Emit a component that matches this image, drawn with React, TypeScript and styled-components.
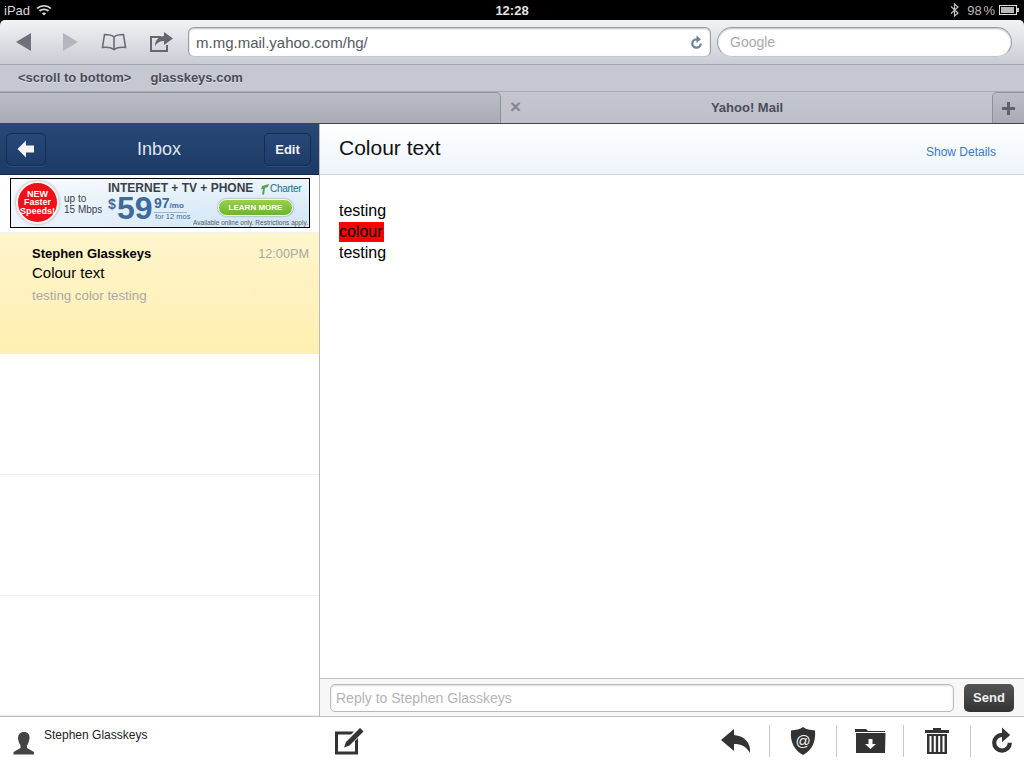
import React from 'react';
import styled, { createGlobalStyle } from 'styled-components';

const Global = createGlobalStyle`
  html, body {
    margin: 0;
    padding: 0;
    background: #000;
  }
  * {
    box-sizing: border-box;
  }
`;

const Screen = styled.div`
  width: 1024px;
  height: 768px;
  overflow: hidden;
  display: flex;
  flex-direction: column;
  background: #fff;
  font-family: "Liberation Sans", Arial, sans-serif;
  color: #000;
`;

const StatusBar = styled.div`
  height: 20px;
  flex: none;
  background: #000;
  color: #d8d8d8;
  font-size: 13px;
  display: grid;
  grid-template-columns: 1fr auto 1fr;
  align-items: center;
  padding: 0 4px;
`;

const StatusSide = styled.div<{ $right?: boolean }>`
  display: flex;
  align-items: center;
  gap: ${p => (p.$right ? '4px' : '6px')};
  justify-content: ${p => (p.$right ? 'flex-end' : 'flex-start')};
`;

const Clock = styled.div`
  font-weight: bold;
  color: #e4e4e4;
`;

const Percent = styled.span`
  word-spacing: -2px;
  margin-left: 4px;
  color: #bcbcbc;
`;

const Battery = styled.div`
  width: 18px;
  height: 10px;
  border: 1px solid #ddd;
  padding: 1px;
  margin-right: 3px;
  position: relative;
  &::before {
    content: '';
    display: block;
    height: 100%;
    width: 96%;
    background: #b8b8b8;
  }
  &::after {
    content: '';
    position: absolute;
    right: -3px;
    top: 2px;
    width: 2px;
    height: 4px;
    background: #ccc;
  }
`;

const Chrome = styled.div`
  height: 104px;
  flex: none;
  background: #000;
`;

const Toolbar = styled.div`
  height: 45px;
  background: linear-gradient(#f2f3f5, #c9ccd4);
  border-bottom: 1px solid #a4a6ac;
  border-radius: 5px 5px 0 0;
  display: flex;
  align-items: center;
  padding: 0 12px 0 15px;
`;

const NavIcons = styled.div`
  width: 173px;
  flex: none;
  display: grid;
  grid-template-columns: 47px 39px 48px 39px;
  align-items: center;
`;

const UrlField = styled.div`
  width: 523px;
  height: 30px;
  flex: none;
  background: #fff;
  border: 1px solid #9a9ca2;
  border-bottom-color: #c4c6cc;
  border-radius: 6px;
  box-shadow: inset 0 1px 2px rgba(0, 0, 0, 0.25);
  color: #55585f;
  font-size: 15px;
  padding: 0 6px 0 7px;
  display: flex;
  align-items: center;
  justify-content: space-between;
`;

const SearchField = styled.div`
  width: 295px;
  height: 30px;
  margin-left: 6px;
  flex: none;
  background: #fff;
  border: 1px solid #9a9ca2;
  border-bottom-color: #c4c6cc;
  border-radius: 15px;
  box-shadow: inset 0 1px 2px rgba(0, 0, 0, 0.25);
  color: #a9a9a9;
  font-size: 14px;
  padding: 0 12px;
  display: flex;
  align-items: center;
`;

const Bookmarks = styled.div`
  height: 27px;
  background: #c6c8d1;
  display: flex;
  align-items: center;
  gap: 19px;
  padding: 0 18px 2px;
  font-size: 13px;
  font-weight: bold;
  color: #4a4c57;
  text-shadow: 0 1px 0 rgba(255, 255, 255, 0.4);
  border-bottom: 1px solid #a9abb2;
`;

const TabStrip = styled.div`
  height: 32px;
  display: flex;
  background: linear-gradient(#c4c6cf, #bdbfc9);
  border-bottom: 1px solid #44464c;
`;

const EmptyTab = styled.div`
  width: 501px;
  flex: none;
  background: linear-gradient(#bcbec6, #a9abb4);
  border-top: 1px solid #93959c;
  border-right: 1px solid #8e9097;
  border-top-right-radius: 5px;
`;

const ActiveTab = styled.div`
  flex: 1;
  position: relative;
  display: flex;
  align-items: center;
  justify-content: center;
  font-size: 13px;
  font-weight: bold;
  color: #4b4d58;
  padding-left: 1px;
`;

const CloseTab = styled.span`
  position: absolute;
  left: 9px;
  top: 6px;
  font-size: 19px;
  font-weight: bold;
  color: #85878e;
  line-height: 18px;
`;

const PlusTab = styled.div`
  width: 32px;
  flex: none;
  background: linear-gradient(#bcbec6, #a9abb4);
  border-top: 1px solid #93959c;
  border-left: 1px solid #8e9097;
  border-top-left-radius: 5px;
  display: flex;
  align-items: center;
  justify-content: center;
`;

const Main = styled.div`
  flex: 1;
  min-height: 0;
  display: flex;
`;

const Sidebar = styled.div`
  width: 320px;
  flex: none;
  border-right: 1px solid #bcbcbc;
  display: flex;
  flex-direction: column;
  box-shadow: inset 0 -2px 2px -2px #bbb;
`;

const NavBar = styled.div`
  height: 51px;
  flex: none;
  background: linear-gradient(#284875, #1d3a66);
  border-bottom: 1px solid #122848;
  display: flex;
  align-items: center;
  justify-content: space-between;
  padding: 0 8px 0 6px;
  position: relative;
`;

const NavTitle = styled.div`
  position: absolute;
  left: 0;
  right: 1px;
  top: 15px;
  text-align: center;
  color: #dfe6f0;
  font-size: 18px;
  pointer-events: none;
`;

const NavButton = styled.div<{ $wide?: boolean }>`
  width: ${p => (p.$wide ? '47px' : '40px')};
  height: 33px;
  border: 1px solid #132c50;
  border-radius: 5px;
  background: linear-gradient(#27487a, #1e3c68);
  box-shadow: 0 1px 0 rgba(255, 255, 255, 0.1);
  color: #f2f4f8;
  font-size: 13px;
  font-weight: bold;
  display: flex;
  align-items: center;
  justify-content: center;
`;

const AdSlot = styled.div`
  height: 58px;
  flex: none;
  padding: 3px 9px 0 10px;
  background: #fff;
  border-bottom: 1px solid #f1f1f1;
`;

const Ad = styled.div`
  width: 300px;
  height: 50px;
  border: 1px solid #000;
  background: radial-gradient(ellipse at 85% 100%, #cfe4f6 0%, #e6f1fa 55%, #fbfcfe 100%);
  position: relative;
  overflow: hidden;
  color: #3b4250;
`;

const AdBadge = styled.div`
  position: absolute;
  left: 5px;
  top: 2px;
  width: 43px;
  height: 43px;
  border-radius: 50%;
  background: #f01019;
  border: 2px solid #f4f4f4;
  box-shadow: 0 0 3px #999;
  color: #fff;
  font-size: 9px;
  line-height: 8.5px;
  font-weight: bold;
  text-align: center;
  display: flex;
  align-items: center;
  justify-content: center;
`;

const AdSpeed = styled.div`
  position: absolute;
  left: 53px;
  top: 14px;
  font-size: 10px;
  line-height: 11px;
  white-space: nowrap;
`;

const AdHead = styled.div`
  position: absolute;
  left: 97px;
  top: 2px;
  font-size: 12px;
  line-height: 14px;
  font-weight: bold;
  white-space: nowrap;
  color: #3a3f49;
`;

const AdLogo = styled.div`
  position: absolute;
  left: 250px;
  top: 5px;
  line-height: 0;
`;

const AdCharter = styled.div`
  position: absolute;
  left: 259px;
  top: 4px;
  font-size: 10px;
  line-height: 12px;
  color: #1b6d8c;
  white-space: nowrap;
  letter-spacing: -0.3px;
`;

const AdDollar = styled.div`
  position: absolute;
  left: 97px;
  top: 17px;
  font-size: 14px;
  line-height: 16px;
  font-weight: bold;
  color: #3e6a9c;
`;

const AdPrice = styled.div`
  position: absolute;
  left: 106px;
  top: 16px;
  font-size: 32px;
  line-height: 26px;
  font-weight: bold;
  color: #3e6a9c;
`;

const AdCents = styled.div`
  position: absolute;
  left: 143px;
  top: 18px;
  font-size: 14px;
  line-height: 13px;
  font-weight: bold;
  color: #3e6a9c;
  border-bottom: 1px solid #9fb6cf;
  width: 33px;
  white-space: nowrap;
  & small {
    font-size: 8px;
  }
`;

const AdTerm = styled.div`
  position: absolute;
  left: 144px;
  top: 33px;
  font-size: 7.5px;
  line-height: 9px;
  color: #3e6a9c;
  white-space: nowrap;
`;

const AdCta = styled.div`
  position: absolute;
  left: 207px;
  top: 20px;
  width: 75px;
  height: 17px;
  border-radius: 9px;
  background: linear-gradient(#9ad04a, #6cb52c);
  border: 1px solid #f3f7ec;
  box-shadow: 0 0 2px #6a7a50;
  color: #fff;
  font-size: 8px;
  font-weight: bold;
  display: flex;
  align-items: center;
  justify-content: center;
`;

const AdFine = styled.div`
  position: absolute;
  right: 1px;
  bottom: 0;
  font-size: 6.5px;
  line-height: 8px;
  color: #55595f;
  white-space: nowrap;
`;

const MessageRow = styled.div`
  height: 121px;
  flex: none;
  background: linear-gradient(#fff5cc, #ffefb0);
  padding: 13px 10px 0 32px;
`;

const MessageTop = styled.div`
  display: flex;
  justify-content: space-between;
  align-items: baseline;
`;

const Sender = styled.div`
  font-size: 13px;
  font-weight: bold;
`;

const Time = styled.div`
  font-size: 12.7px;
  color: #a8a8a4;
`;

const Subject = styled.div`
  font-size: 15px;
  margin-top: 3px;
`;

const Preview = styled.div`
  font-size: 13.3px;
  color: #a9a9a9;
  margin-top: 7px;
`;

const EmptyRow = styled.div`
  height: 121px;
  flex: none;
  border-bottom: 1px solid #efefef;
`;

const Reader = styled.div`
  flex: 1;
  min-width: 0;
  display: flex;
  flex-direction: column;
`;

const ReaderHead = styled.div`
  height: 51px;
  flex: none;
  background: linear-gradient(#fff, #edf4fc);
  border-bottom: 1px solid #cfd1d4;
  display: flex;
  justify-content: space-between;
  padding: 11px 28px 0 19px;
`;

const ReaderTitle = styled.div`
  font-size: 21px;
  line-height: 26px;
  color: #111;
`;

const Details = styled.div`
  font-size: 12px;
  color: #3a78c4;
  margin-top: 10px;
`;

const Body = styled.div`
  flex: 1;
  padding: 25px 19px 0;
  font-size: 16px;
  line-height: 21px;
`;

const Highlight = styled.span`
  background: #ff0000;
  display: inline-block;
  line-height: 20px;
  padding-right: 1px;
`;

const ReplyBar = styled.div`
  height: 38px;
  flex: none;
  border-top: 1px solid #c0c0c0;
  background: #f7f7f7;
  display: flex;
  align-items: center;
  gap: 10px;
  padding: 0 10px;
`;

const ReplyInput = styled.div`
  flex: 1;
  height: 28px;
  background: #fff;
  border: 1px solid #b9b9b9;
  border-radius: 5px;
  box-shadow: inset 0 1px 2px rgba(0, 0, 0, 0.15);
  color: #b4b4b4;
  font-size: 14px;
  padding: 0 5px;
  display: flex;
  align-items: center;
`;

const SendButton = styled.div`
  width: 50px;
  height: 28px;
  border-radius: 5px;
  background: linear-gradient(#555, #333);
  color: #f0f0f0;
  font-size: 13px;
  font-weight: bold;
  display: flex;
  align-items: center;
  justify-content: center;
`;

const BottomBar = styled.div`
  height: 52px;
  flex: none;
  background: #fff;
  border-top: 1px solid #bdbdbd;
  display: flex;
`;

const Account = styled.div`
  width: 334px;
  flex: none;
  display: flex;
  padding: 11px 0 0 13px;
  gap: 9px;
  font-size: 12px;
  line-height: 14px;
  color: #222;
`;

const AccountIcon = styled.div`
  margin-top: 4px;
`;

const Compose = styled.div`
  padding-top: 9px;
`;

const Actions = styled.div`
  margin-left: auto;
  display: flex;
  align-items: center;
  padding-bottom: 3px;
`;

const ActionCell = styled.div<{ $last?: boolean }>`
  width: ${p => (p.$last ? '53px' : '67px')};
  height: 32px;
  display: flex;
  align-items: center;
  justify-content: center;
  padding-left: ${p => (p.$last ? '9px' : '0')};
  border-right: ${p => (p.$last ? 'none' : '1px solid #c8c8c8')};
`;

const Back = () => (
  <svg width="18" height="20" viewBox="0 0 18 20">
    <path d="M16 1v18L1 10z" fill="#6e7179" />
  </svg>
);

const Forward = () => (
  <svg width="18" height="20" viewBox="0 0 18 20">
    <path d="M1 1v18l15-9z" fill="#b3b6bd" />
  </svg>
);

const BookIcon = () => (
  <svg width="26" height="18" viewBox="0 0 26 18" fill="none" stroke="#6a6d75" strokeWidth="1.6">
    <path d="M13 4C11 2 8 1.500 3.500 1.500L1.500 14.500C6 14 10 14.500 13 16.500C16 14.500 20 14 24.500 14.500L22.500 1.500C18 1.500 15 2 13 4V16" />
  </svg>
);

const ShareIcon = () => (
  <svg width="25" height="21" viewBox="0 0 25 21">
    <path d="M1 4h11v2H3v12h14v-5h2v7H1z" fill="#64676f" />
    <path d="M15 0l9 6.500-9 6.500V9c-4 0-7 1.500-9 5 0-6 4-9.500 9-10z" fill="#64676f" />
  </svg>
);

const Reload = ({ color, size }: { color: string; size: number }) => (
  <svg width={size} height={size} viewBox="0 0 24 24">
    <path
      d="M12 5a8.500 8.500 0 1 0 8.500 8.500h-3.600A4.900 4.900 0 1 1 12 8.600V13l7-6.200L12 .5z"
      fill={color}
    />
  </svg>
);

const Wifi = () => (
  <svg width="16" height="12" viewBox="0 0 16 12" fill="none" stroke="#ddd" strokeWidth="1.700">
    <path d="M1 4.500C5 .8 11 .8 15 4.500" />
    <path d="M3.500 7C6 4.800 10 4.800 12.500 7" />
    <path d="M8 11.500L5.800 9.200C7 8.200 9 8.200 10.200 9.200z" fill="#ddd" stroke="none" />
  </svg>
);

const Bluetooth = () => (
  <svg width="9" height="14" viewBox="0 0 9 14" fill="none" stroke="#c4c4c4" strokeWidth="1.200">
    <path d="M1 3.500l7 6.500-3.500 3V1L8 4 1 10.500" />
  </svg>
);

const ArrowLeft = () => (
  <svg width="18" height="18" viewBox="0 0 18 18">
    <path d="M9 .5v5h8v7H9v5L.5 9z" fill="#f4f4f4" />
  </svg>
);

const Plus = () => (
  <svg width="13" height="13" viewBox="0 0 13 13">
    <path d="M5 0h3v5h5v3H8v5H5V8H0V5h5z" fill="#5f616a" />
  </svg>
);

const CharterMark = () => (
  <svg width="9" height="11" viewBox="0 0 9 11">
    <path d="M1 2l7-2-1 3-3 1-1 7-2-1 1-5-2 .5z" fill="#5f9e58" />
  </svg>
);

const Person = () => (
  <svg width="22" height="23" viewBox="0 0 22 23">
    <path
      d="M11 0c4 0 6 2.500 5.500 6.500C16 10 15 12 14 13.500V16l7 4v2.500H.5V20l7-4v-2.500C6.500 12 5.500 10 5 6.500 5 2.500 7 0 11 0z"
      fill="#444"
    />
  </svg>
);

const ComposeIcon = () => (
  <svg width="31" height="30" viewBox="0 0 31 30">
    <path d="M1 5.500h19l-3 3H4v17h17V15l3-3v16.500H1z" fill="#333" />
    <path d="M12 16L26 2l3.500 3.500-14 14L10 21.500z" fill="#333" />
  </svg>
);

const ReplyIcon = () => (
  <svg width="32" height="26" viewBox="0 0 32 26">
    <path d="M14 1L1 12l13 11v-7c7 0 12 2 16 9 1-10-5-17-16-18z" fill="#333" />
  </svg>
);

const ShieldIcon = () => (
  <svg width="26" height="28" viewBox="0 0 26 28">
    <path d="M13 0c3 2.500 7 3 12 3.500C26 15 22 23 13 28 4 23 0 15 1 3.500 6 3 10 2.500 13 0z" fill="#333" />
    <text x="13" y="18.500" textAnchor="middle" fill="#f2f2f2" fontSize="15" fontFamily="Liberation Sans, sans-serif">@</text>
  </svg>
);

const FolderIcon = () => (
  <svg width="31" height="24" viewBox="0 0 31 24">
    <path d="M0 0h11l2 2h17v1H0z" fill="#333" />
    <path d="M1 4h29.500L30 24H1z" fill="#333" />
    <path d="M13.500 10h4v5H21l-5.500 5L10 15h3.500z" fill="#fff" />
  </svg>
);

const TrashIcon = () => (
  <svg width="24" height="26" viewBox="0 0 24 26">
    <path d="M8 0h8v2h8v3H0V2h8z" fill="#333" />
    <path d="M2 6h20v20H2z" fill="#333" />
    <path d="M4.500 8h2v16h-2zM8.800 8h2v16h-2zM13.200 8h2v16h-2zM17.500 8h2v16h-2z" fill="#fff" />
  </svg>
);

export default function App() {
  return (
    <Screen>
      <Global />
      <StatusBar>
        <StatusSide>
          iPad <Wifi />
        </StatusSide>
        <Clock>12:28</Clock>
        <StatusSide $right>
          <Bluetooth />
          <Percent>98 %</Percent>
          <Battery />
        </StatusSide>
      </StatusBar>
      <Chrome>
        <Toolbar>
          <NavIcons>
            <Back />
            <Forward />
            <BookIcon />
            <ShareIcon />
          </NavIcons>
          <UrlField>
            m.mg.mail.yahoo.com/hg/
            <Reload color="#6f8199" size={15} />
          </UrlField>
          <SearchField>Google</SearchField>
        </Toolbar>
        <Bookmarks>
          <span>&lt;scroll to bottom&gt;</span>
          <span>glasskeys.com</span>
        </Bookmarks>
        <TabStrip>
          <EmptyTab />
          <ActiveTab>
            <CloseTab>×</CloseTab>
            Yahoo! Mail
          </ActiveTab>
          <PlusTab>
            <Plus />
          </PlusTab>
        </TabStrip>
      </Chrome>
      <Main>
        <Sidebar>
          <NavBar>
            <NavButton>
              <ArrowLeft />
            </NavButton>
            <NavTitle>Inbox</NavTitle>
            <NavButton $wide>Edit</NavButton>
          </NavBar>
          <AdSlot>
            <Ad>
              <AdBadge>
                NEW
                <br />
                Faster
                <br />
                Speeds!
              </AdBadge>
              <AdSpeed>
                up to
                <br />
                15 Mbps
              </AdSpeed>
              <AdHead>INTERNET + TV + PHONE</AdHead>
              <AdLogo>
                <CharterMark />
              </AdLogo>
              <AdCharter>Charter</AdCharter>
              <AdDollar>$</AdDollar>
              <AdPrice>59</AdPrice>
              <AdCents>
                97<small>/mo</small>
              </AdCents>
              <AdTerm>for 12 mos</AdTerm>
              <AdCta>LEARN MORE</AdCta>
              <AdFine>Available online only. Restrictions apply.</AdFine>
            </Ad>
          </AdSlot>
          <MessageRow>
            <MessageTop>
              <Sender>Stephen Glasskeys</Sender>
              <Time>12:00PM</Time>
            </MessageTop>
            <Subject>Colour text</Subject>
            <Preview>testing color testing</Preview>
          </MessageRow>
          <EmptyRow />
          <EmptyRow />
        </Sidebar>
        <Reader>
          <ReaderHead>
            <ReaderTitle>Colour text</ReaderTitle>
            <Details>Show Details</Details>
          </ReaderHead>
          <Body>
            testing
            <br />
            <Highlight>colour</Highlight>
            <br />
            testing
          </Body>
          <ReplyBar>
            <ReplyInput>Reply to Stephen Glasskeys</ReplyInput>
            <SendButton>Send</SendButton>
          </ReplyBar>
        </Reader>
      </Main>
      <BottomBar>
        <Account>
          <AccountIcon>
            <Person />
          </AccountIcon>
          Stephen Glasskeys
        </Account>
        <Compose>
          <ComposeIcon />
        </Compose>
        <Actions>
          <ActionCell>
            <ReplyIcon />
          </ActionCell>
          <ActionCell>
            <ShieldIcon />
          </ActionCell>
          <ActionCell>
            <FolderIcon />
          </ActionCell>
          <ActionCell>
            <TrashIcon />
          </ActionCell>
          <ActionCell $last>
            <Reload color="#333" size={28} />
          </ActionCell>
        </Actions>
      </BottomBar>
    </Screen>
  );
}
